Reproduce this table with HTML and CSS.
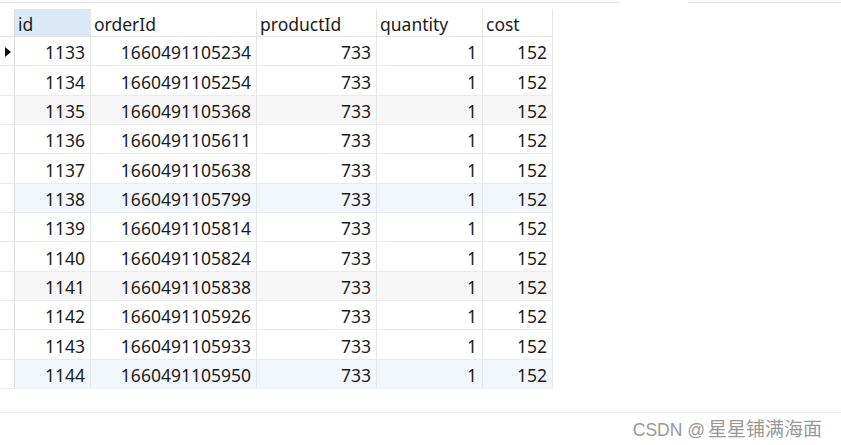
FILE: index.html
```html
<!DOCTYPE html>
<html lang="zh">
<head>
<meta charset="utf-8">
<title>orderdetail</title>
<link rel="stylesheet" href="styles.css">
</head>
<body>
<div class="toprule">
  <div class="seg seg-a"></div>
  <div class="seg seg-b"></div>
</div>
<div class="grid">
  <div class="row head">
    <div class="ind"></div>
    <div class="cell sel">id</div>
    <div class="cell">orderId</div>
    <div class="cell">productId</div>
    <div class="cell">quantity</div>
    <div class="cell">cost</div>
  </div>
  <div class="row"><div class="ind"><span class="tri"></span></div><div class="cell num">1133</div><div class="cell num">1660491105234</div><div class="cell num">733</div><div class="cell num">1</div><div class="cell num">152</div></div>
  <div class="row"><div class="ind"></div><div class="cell num">1134</div><div class="cell num">1660491105254</div><div class="cell num">733</div><div class="cell num">1</div><div class="cell num">152</div></div>
  <div class="row gray"><div class="ind"></div><div class="cell num">1135</div><div class="cell num">1660491105368</div><div class="cell num">733</div><div class="cell num">1</div><div class="cell num">152</div></div>
  <div class="row"><div class="ind"></div><div class="cell num">1136</div><div class="cell num">1660491105611</div><div class="cell num">733</div><div class="cell num">1</div><div class="cell num">152</div></div>
  <div class="row"><div class="ind"></div><div class="cell num">1137</div><div class="cell num">1660491105638</div><div class="cell num">733</div><div class="cell num">1</div><div class="cell num">152</div></div>
  <div class="row blue"><div class="ind"></div><div class="cell num">1138</div><div class="cell num">1660491105799</div><div class="cell num">733</div><div class="cell num">1</div><div class="cell num">152</div></div>
  <div class="row"><div class="ind"></div><div class="cell num">1139</div><div class="cell num">1660491105814</div><div class="cell num">733</div><div class="cell num">1</div><div class="cell num">152</div></div>
  <div class="row"><div class="ind"></div><div class="cell num">1140</div><div class="cell num">1660491105824</div><div class="cell num">733</div><div class="cell num">1</div><div class="cell num">152</div></div>
  <div class="row gray"><div class="ind"></div><div class="cell num">1141</div><div class="cell num">1660491105838</div><div class="cell num">733</div><div class="cell num">1</div><div class="cell num">152</div></div>
  <div class="row"><div class="ind"></div><div class="cell num">1142</div><div class="cell num">1660491105926</div><div class="cell num">733</div><div class="cell num">1</div><div class="cell num">152</div></div>
  <div class="row"><div class="ind"></div><div class="cell num">1143</div><div class="cell num">1660491105933</div><div class="cell num">733</div><div class="cell num">1</div><div class="cell num">152</div></div>
  <div class="row blue last"><div class="ind"></div><div class="cell num">1144</div><div class="cell num">1660491105950</div><div class="cell num">733</div><div class="cell num">1</div><div class="cell num">152</div></div>
</div>
<div class="footer-space"></div>
<div class="watermark"><span class="wm-lat">CSDN @</span><span class="wm-cjk">星星铺满海面</span></div>
</body>
</html>
```
FILE: styles.css
```css
html, body {
  margin: 0;
  padding: 0;
  background: #ffffff;
}
body {
  width: 841px;
  height: 445px;
  overflow: hidden;
  font-family: "Noto Sans", "Open Sans", sans-serif;
  color: #1c1c1c;
}
.toprule {
  display: flex;
  gap: 68px;
  padding-top: 2px;
  height: 1px;
}
.seg {
  height: 1px;
  background: #e4e4e4;
}
.seg-a { width: 620px; }
.seg-b { flex: 1; }
.grid {
  margin-top: 6px;
  width: 553px;
}
.row {
  display: grid;
  grid-template-columns: 15px 76px 166px 120px 106px 70px;
  height: 29.33px;
  box-sizing: border-box;
  border-bottom: 1px solid #ebebeb;
}
.row.head {
  height: 28px;
  border-bottom: 1px solid #e6e6e6;
}
.row.gray { background: #f7f7f7; }
.row.blue { background: #f2f7fd; }
.row.blue .ind, .row.gray .ind { background: #ffffff; }
.row.last { border-bottom: 1px solid #efefef; }
.ind {
  box-sizing: border-box;
  border-right: 1px solid #dcdcdc;
  display: flex;
  align-items: center;
  padding-left: 5px;
  padding-top: 2px;
}
.tri {
  width: 0;
  height: 0;
  border-top: 5.5px solid transparent;
  border-bottom: 5.5px solid transparent;
  border-left: 6px solid #111111;
}
.cell {
  box-sizing: border-box;
  border-right: 1px solid #e8e8e8;
  font-size: 17.5px;
  line-height: 1;
  display: flex;
  align-items: center;
  padding: 4px 5px 0 3px;
  white-space: nowrap;
}
.head .cell {
  padding-top: 5px;
}
.cell.sel {
  background: #dbe9f7;
}
.cell.num {
  justify-content: flex-end;
  padding-right: 5px;
}
.footer-space {
  height: 23px;
  border-bottom: 1px solid #ececec;
}
.watermark {
  display: flex;
  justify-content: flex-end;
  align-items: baseline;
  padding-right: 19px;
  margin-top: 1px;
  color: #999999;
}
.wm-lat {
  font-family: "Liberation Sans", Arial, sans-serif;
  font-size: 17.5px;
  margin-right: 3px;
}
.wm-cjk {
  font-family: "Noto Sans CJK SC", sans-serif;
  font-size: 19px;
}
```
